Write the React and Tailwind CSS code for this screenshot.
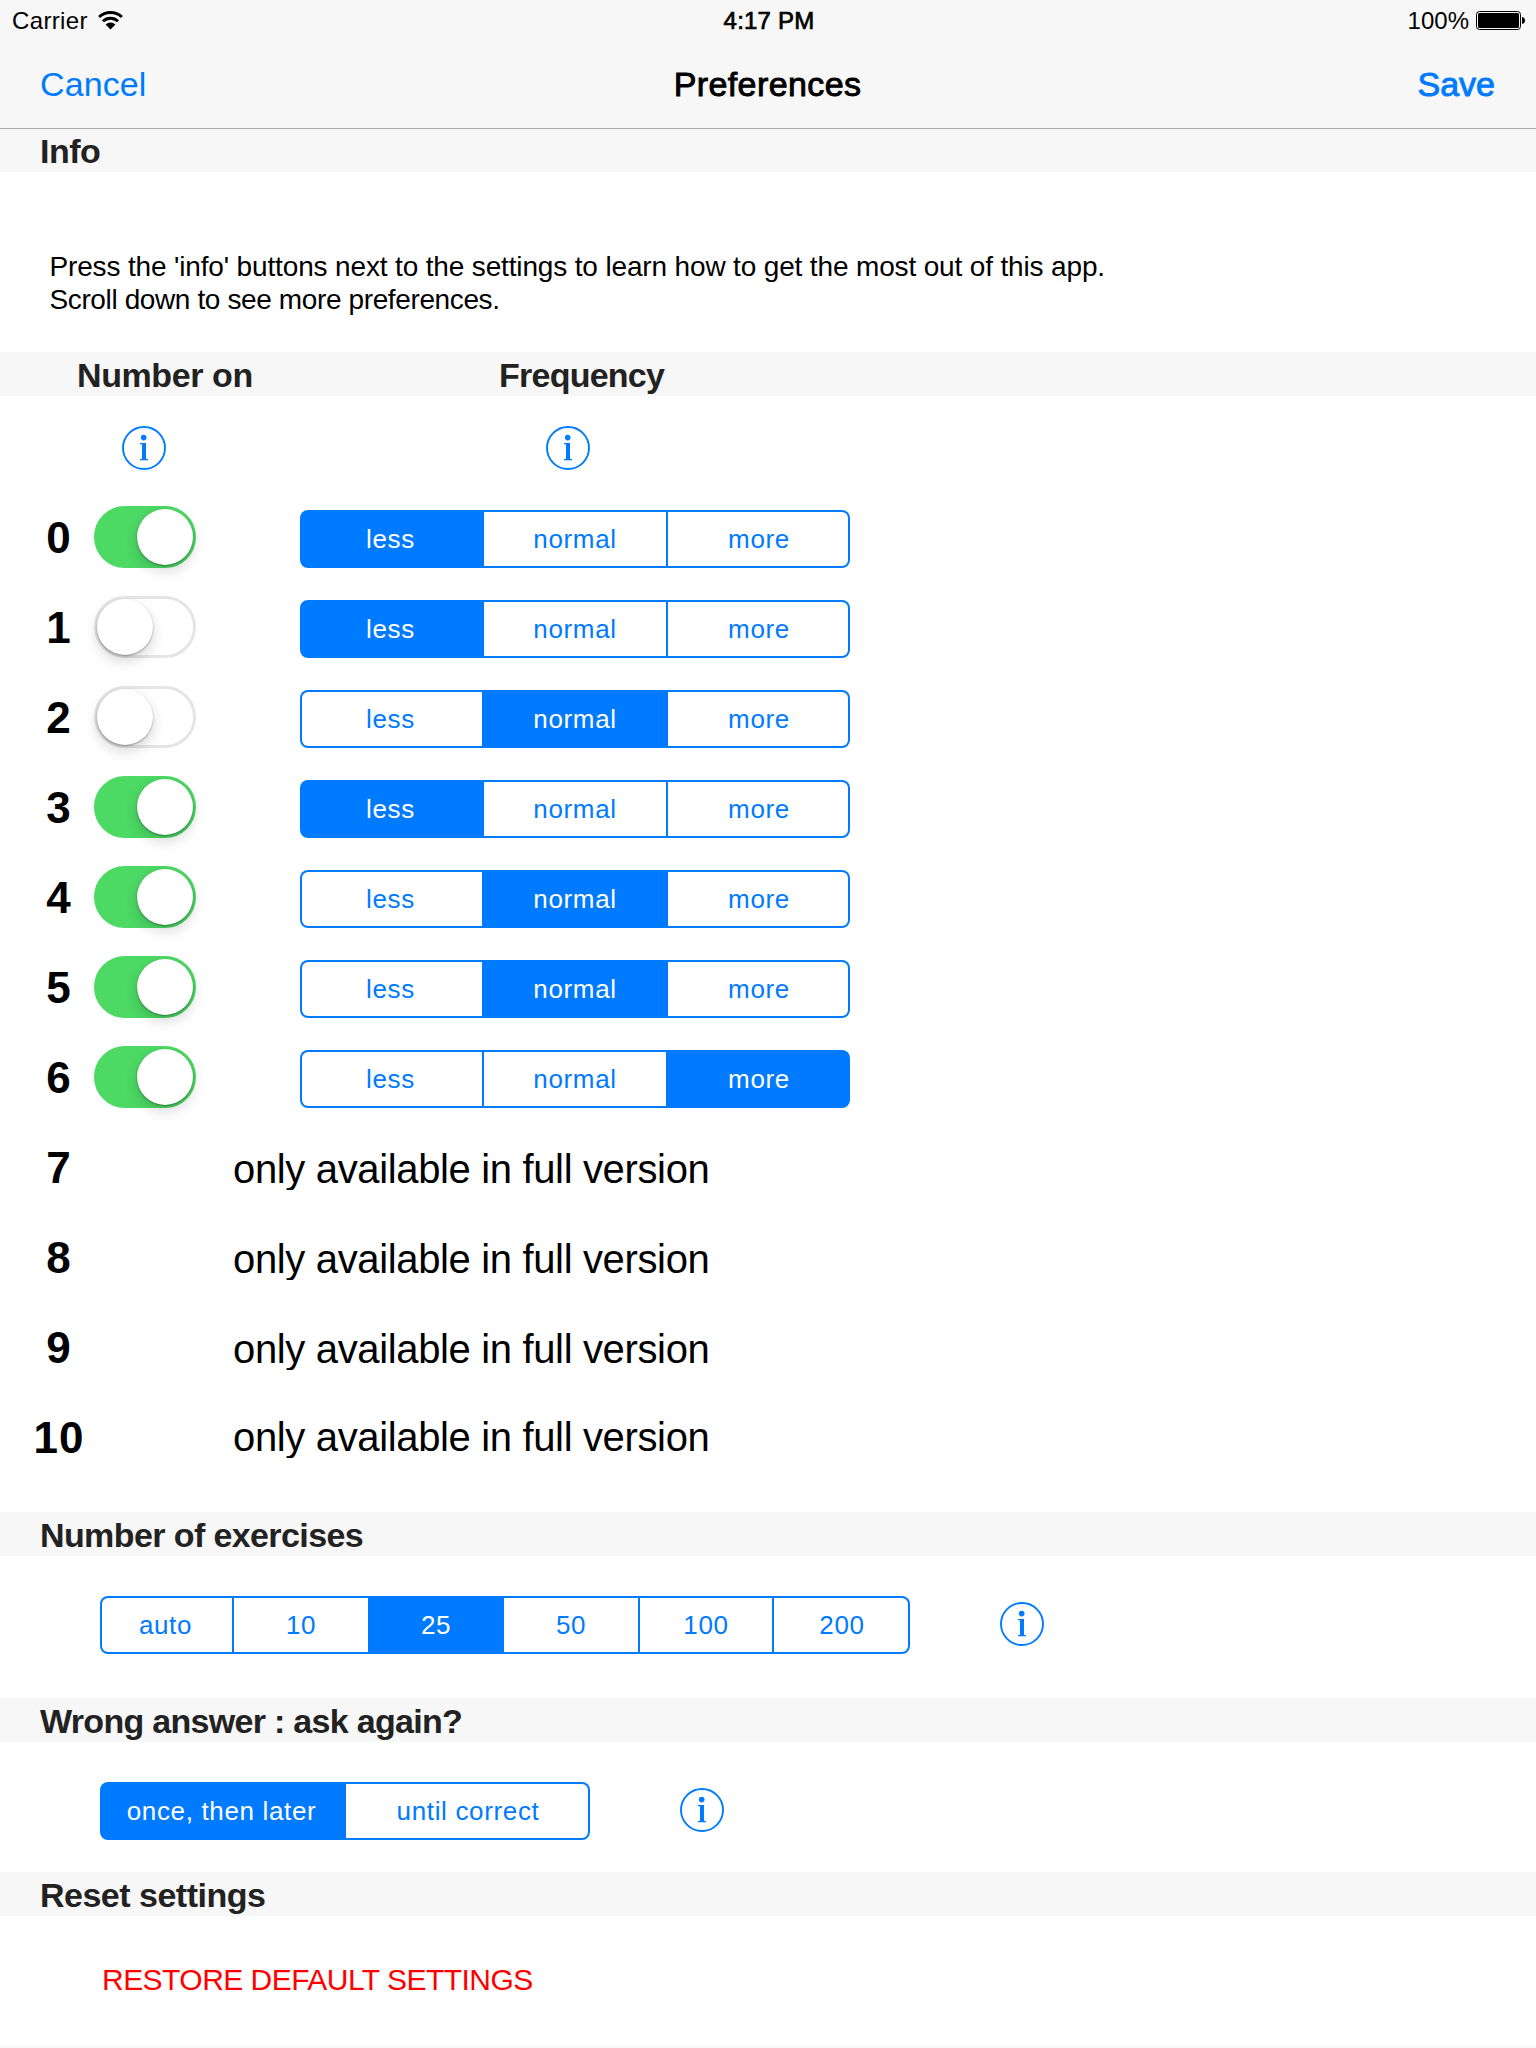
import React from 'react';

const FREQUENCIES = [
    { label: 'less', width: 180 },
    { label: 'normal', width: 184 },
    { label: 'more', width: 182 },
];

const EXERCISES = [
    { label: 'auto', width: 130 },
    { label: '10', width: 136 },
    { label: '25', width: 134 },
    { label: '50', width: 136 },
    { label: '100', width: 134 },
    { label: '200', width: 136 },
];

const RETRIES = [
    { label: 'once, then later', width: 242 },
    { label: 'until correct', width: 244 },
];

const NUMBERS = [
    { value: 0, on: true, frequency: 'less' },
    { value: 1, on: false, frequency: 'less' },
    { value: 2, on: false, frequency: 'normal' },
    { value: 3, on: true, frequency: 'less' },
    { value: 4, on: true, frequency: 'normal' },
    { value: 5, on: true, frequency: 'normal' },
    { value: 6, on: true, frequency: 'more' },
];

const LOCKED_NUMBERS = [7, 8, 9, 10];

const WifiIcon = () => (
    <svg width="25" height="19" viewBox="0 0 25 19" fill="none" stroke="#000" strokeWidth="2.9">
        <path d="M1.1 6A16.6 16.6 0 0 1 23.9 6" />
        <path d="M5 10.3A10.9 10.9 0 0 1 20 10.3" />
        <path d="M7.6 13.6A7 7 0 0 1 17.4 13.6L12.5 18.4Z" fill="#000" stroke="none" />
    </svg>
);

const BatteryIcon = () => (
    <svg width="50" height="19" viewBox="0 0 50 19">
        <rect x="0.5" y="0.5" width="44" height="18" rx="3" fill="none" stroke="#000" />
        <rect x="2" y="2" width="41" height="15" rx="1.5" />
        <path d="M46 6c4 0.8 4 6.2 0 7z" />
    </svg>
);

const InfoButton = ({ className = '' }) => (
    <button className={`block size-11 shrink-0 ${className}`} aria-label="Info">
        <svg width="44" height="44" viewBox="0 0 44 44" fill="#007aff">
            <circle cx="22" cy="22" r="21" fill="none" stroke="#007aff" strokeWidth="1.9" />
            <circle cx="21.7" cy="11.6" r="2.8" />
            <path d="M18 17H24V33H26V34.2H18V33H20V18.2H18Z" />
        </svg>
    </button>
);

const SectionHeader = ({ className = '', children }) => (
    <h2 className={`flex items-center bg-[#f7f7f7] text-[34px] leading-none font-bold whitespace-nowrap text-[#222] ${className}`}>
        {children}
    </h2>
);

const Switch = ({ on }) => (
    <span
        className={`flex h-[62px] w-[102px] shrink-0 rounded-full border-3 ${
            on ? 'justify-end border-[#4cd964] bg-[#4cd964]' : 'border-[#e5e5e5] bg-white'
        }`}
    >
        <span className="size-14 rounded-full bg-white shadow-[0_1px_2px_rgba(0,0,0,0.35),0_6px_14px_rgba(0,0,0,0.16)]"></span>
    </span>
);

const Segmented = ({ options, selected, className = '' }) => (
    <div className={`flex h-[58px] shrink-0 overflow-hidden rounded-[8px] bg-[#007aff] p-0.5 ${className}`}>
        {options.map(({ label, width }) => (
            <button
                key={label}
                className={`flex items-center justify-center border-l-2 border-[#007aff] text-[26px] leading-none tracking-[0.65px] whitespace-nowrap first:rounded-l-[6px] first:border-l-0 first:pr-[3px] last:rounded-r-[6px] last:pl-0.5 ${
                    label === selected ? 'bg-[#007aff] text-white' : 'bg-white text-[#007aff]'
                }`}
                style={{ width }}
            >
                {label}
            </button>
        ))}
    </div>
);

const NumberLabel = ({ children }) => (
    <span className="ml-7 w-[60px] shrink-0 pt-0.5 pl-0.5 text-center text-[44px] leading-none font-bold tracking-[1px]">
        {children}
    </span>
);

const App = () => (
    <div className="h-[2048px] w-[1536px] overflow-hidden bg-white font-['Liberation_Sans',Arial,sans-serif] text-black">
        {/* Status bar and navigation bar */}
        <header className="h-[129px] border-b border-[#acacac] bg-[#f7f7f7]">
            <div className="grid h-[41px] grid-cols-3 items-center text-2xl leading-none">
                <div className="flex items-center gap-2.5 pl-3">
                    <span className="tracking-[0.35px]">Carrier</span>
                    <WifiIcon />
                </div>
                <span className="pl-0.5 text-center tracking-[0.2px] [-webkit-text-stroke:0.7px_#000]">4:17 PM</span>
                <div className="flex items-center justify-end gap-[7px] pr-2.5">
                    <span>100%</span>
                    <BatteryIcon />
                </div>
            </div>
            <div className="grid h-[85px] grid-cols-3 items-center pr-[41px] pl-10 text-[34px] leading-none">
                <button className="text-left tracking-[0.1px] text-[#007aff]">Cancel</button>
                <h1 className="text-center tracking-[0.4px] [-webkit-text-stroke:0.9px_#000]">Preferences</h1>
                <button className="text-right text-[#007aff] [-webkit-text-stroke:0.9px_#007aff]">Save</button>
            </div>
        </header>

        <SectionHeader className="h-[43px] pl-10 tracking-[-0.5px]">Info</SectionHeader>
        <div className="h-[180px] pt-[78px] pl-[49.5px] text-[28px] leading-[33px] whitespace-nowrap">
            <p className="tracking-[-0.15px]">
                Press the 'info' buttons next to the settings to learn how to get the most out of this app.
            </p>
            <p className="tracking-[-0.38px]">Scroll down to see more preferences.</p>
        </div>

        {/* Per-number settings */}
        <SectionHeader className="h-11 pt-0.5 pl-[77px]">
            <span className="w-[422px] tracking-[-0.4px]">Number on</span>
            <span className="tracking-[-0.75px]">Frequency</span>
        </SectionHeader>
        <div className="flex h-24 gap-[380px] pt-[30px] pl-[122px]">
            <InfoButton />
            <InfoButton />
        </div>
        {NUMBERS.map(({ value, on, frequency }) => (
            <div key={value} className="flex h-[90px] items-center">
                <NumberLabel>{value}</NumberLabel>
                <div className="ml-1.5">
                    <Switch on={on} />
                </div>
                <Segmented options={FREQUENCIES} selected={frequency} className="mt-1 ml-[104px]" />
            </div>
        ))}
        {LOCKED_NUMBERS.map((value) => (
            <div key={value} className="flex h-[90px] items-center">
                <NumberLabel>{value}</NumberLabel>
                <span
                    className={`ml-[145px] h-[42px] overflow-hidden text-[40px] leading-[42px] tracking-[-0.35px] whitespace-nowrap ${
                        value === 10 ? '' : 'mt-1'
                    }`}
                >
                    only available in full version
                </span>
            </div>
        ))}

        <SectionHeader className="mt-[30px] h-11 pt-0.5 pl-10 tracking-[-0.6px]">Number of exercises</SectionHeader>
        <div className="flex h-[142px] pt-10 pl-[100px]">
            <Segmented options={EXERCISES} selected="25" />
            <InfoButton className="mt-1.5 ml-[90px]" />
        </div>

        <SectionHeader className="h-11 pt-0.5 pl-10 tracking-[-0.7px]">Wrong answer : ask again?</SectionHeader>
        <div className="flex h-[130px] pt-10 pl-[100px]">
            <Segmented options={RETRIES} selected="once, then later" />
            <InfoButton className="mt-1.5 ml-[90px]" />
        </div>

        <SectionHeader className="h-11 pt-0.5 pl-10 tracking-[-0.5px]">Reset settings</SectionHeader>
        <div className="flex h-[130px] items-center pb-0.5 pl-[102px]">
            <button className="text-[30px] leading-none tracking-[-0.53px] text-[#f00]">RESTORE DEFAULT SETTINGS</button>
        </div>
        <div className="h-0.5 bg-[#f7f7f7]"></div>
    </div>
);

export default App;
